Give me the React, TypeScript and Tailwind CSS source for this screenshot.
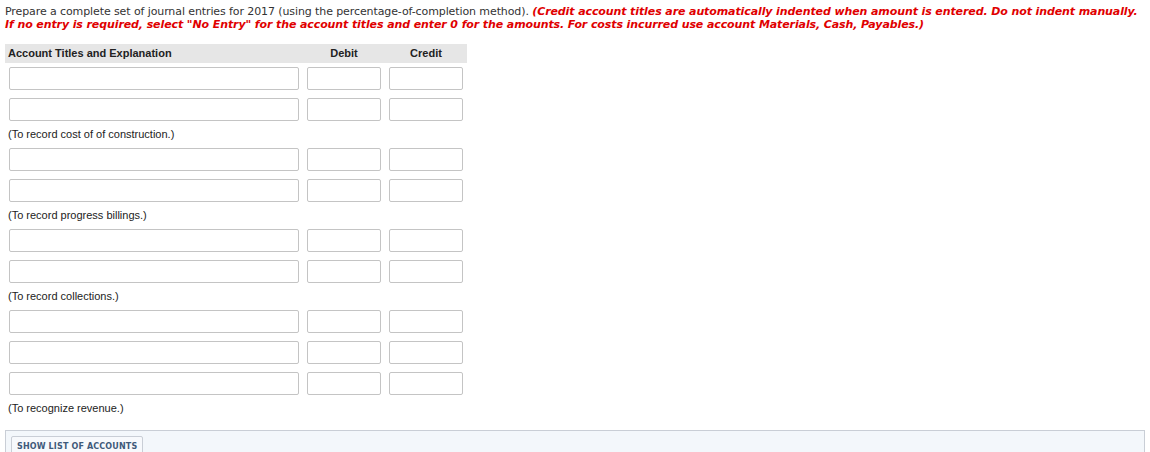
import React from 'react';

type Row = { kind: 'input' } | { kind: 'label'; text: string };

const rows: Row[] = [
  { kind: 'input' },
  { kind: 'input' },
  { kind: 'label', text: '(To record cost of of construction.)' },
  { kind: 'input' },
  { kind: 'input' },
  { kind: 'label', text: '(To record progress billings.)' },
  { kind: 'input' },
  { kind: 'input' },
  { kind: 'label', text: '(To record collections.)' },
  { kind: 'input' },
  { kind: 'input' },
  { kind: 'input' },
  { kind: 'label', text: '(To recognize revenue.)' },
];

const boxClass =
  'h-[23px] w-full border border-[#c4c4c4] rounded-[2px] bg-white outline-none';

const App: React.FC = () => {
  return (
    <div className="w-[1150px] h-[452px] overflow-hidden bg-white text-[#333]">
      <div className="pt-[5px] pl-[5px] pr-[5px] text-[11px] leading-[13px] font-['DejaVu_Sans',sans-serif] tracking-[-0.1px]">
        <p>
          Prepare a complete set of journal entries for 2017 (using the percentage-of-completion method).{' '}
          <span className="font-bold italic text-[#e00000]">
            (Credit account titles are automatically indented when amount is entered. Do not indent manually.
            <br />
            If no entry is required, select "No Entry" for the account titles and enter 0 for the amounts. For
            costs incurred use account Materials, Cash, Payables.)
          </span>
        </p>
      </div>

      <table className="ml-[5px] mt-[13px] w-[462px] border-collapse font-['Liberation_Sans',sans-serif] text-[11px] text-[#222]">
        <thead>
          <tr className="bg-[#e6e6e6] h-[19px]">
            <th className="text-left font-bold pl-[3px] w-[298px]">Account Titles and Explanation</th>
            <th className="text-center font-bold w-[82px]">Debit</th>
            <th className="text-center font-bold w-[82px]">Credit</th>
          </tr>
        </thead>
        <tbody>
          {rows.map((row, i) =>
            row.kind === 'input' ? (
              <tr key={i}>
                <td className="p-[4px]">
                  <input className={boxClass} />
                </td>
                <td className="p-[4px]">
                  <input className={boxClass} />
                </td>
                <td className="p-[4px]">
                  <input className={boxClass} />
                </td>
              </tr>
            ) : (
              <tr key={i}>
                <td colSpan={3} className="pl-[3px] pt-[3px] pb-[4px] h-[19px] leading-[12px] text-[#222]">
                  {row.text}
                </td>
              </tr>
            )
          )}
        </tbody>
      </table>

      <div className="mx-[5px] mt-[12px] flex items-start border border-[#c9ced6] bg-[#f3f7fb] px-[5px] pt-[5px] h-[40px]">
        <button className="border border-[#c9ced6] rounded-t-[2px] bg-[#f7f9fc] px-[5px] pt-[5px] pb-[4px] leading-[10px] font-['DejaVu_Sans',sans-serif] text-[8px] font-bold text-[#3f5a7a] tracking-[0.15px]">
          SHOW LIST OF ACCOUNTS
        </button>
      </div>
    </div>
  );
};

export default App;
